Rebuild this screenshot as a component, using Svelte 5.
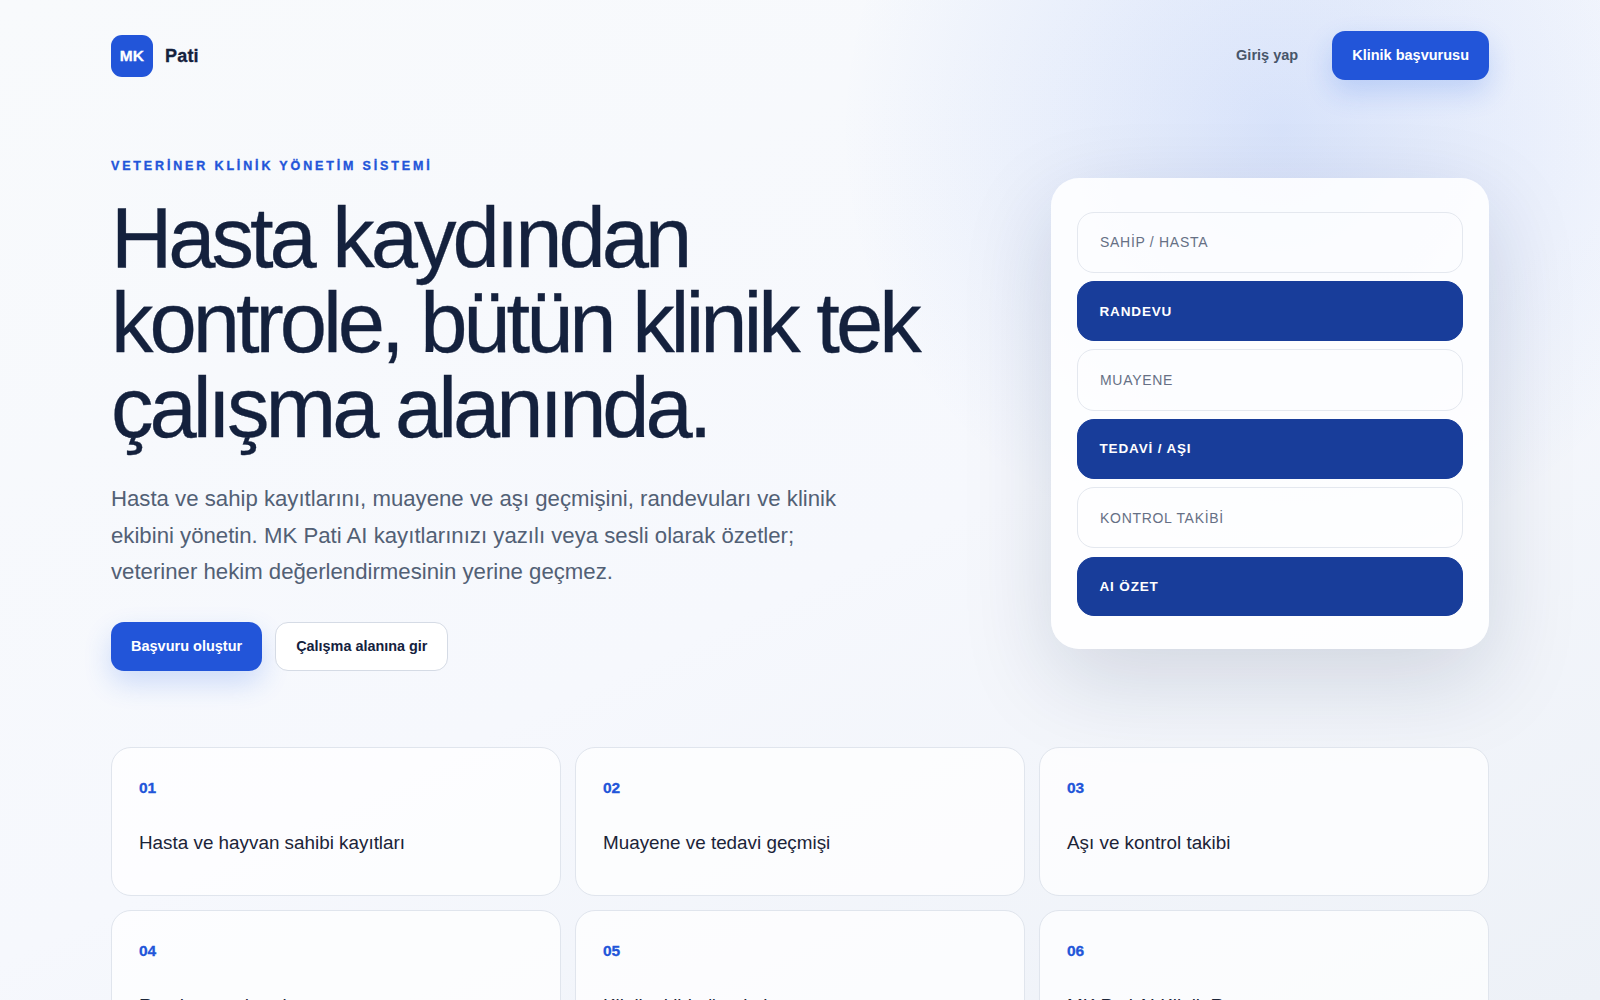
<script>
  const rows = [
    { label: 'SAHİP / HASTA', on: false },
    { label: 'RANDEVU', on: true },
    { label: 'MUAYENE', on: false },
    { label: 'TEDAVİ / AŞI', on: true },
    { label: 'KONTROL TAKİBİ', on: false },
    { label: 'AI ÖZET', on: true }
  ];
  const features = [
    ['01', 'Hasta ve hayvan sahibi kayıtları'],
    ['02', 'Muayene ve tedavi geçmişi'],
    ['03', 'Aşı ve kontrol takibi'],
    ['04', 'Randevu ve hatırlatma'],
    ['05', 'Klinik ekibi yönetimi'],
    ['06', 'MK Pati AI Klinik Raporu']
  ];
</script>

<div class="page">
  <header class="top">
    <a class="brand" href="#top"><span class="mark">MK</span><span class="name">Pati</span></a>
    <nav class="nav">
      <a class="login" href="#login">Giriş yap</a>
      <a class="btn primary" href="#apply">Klinik başvurusu</a>
    </nav>
  </header>

  <main>
    <section class="hero">
      <div class="copy">
        <p class="eyebrow">VETERİNER KLİNİK YÖNETİM SİSTEMİ</p>
        <h1>Hasta kaydından kontrole, bütün klinik tek çalışma alanında.</h1>
        <p class="lead">Hasta ve sahip kayıtlarını, muayene ve aşı geçmişini, randevuları ve klinik ekibini yönetin. MK Pati AI kayıtlarınızı yazılı veya sesli olarak özetler; veteriner hekim değerlendirmesinin yerine geçmez.</p>
        <div class="actions">
          <a class="btn primary" href="#apply">Başvuru oluştur</a>
          <a class="btn ghost" href="#work">Çalışma alanına gir</a>
        </div>
      </div>
      <aside class="panel">
        {#each rows as r}
          <div class="row" class:on={r.on}>{r.label}</div>
        {/each}
      </aside>
    </section>

    <section class="grid">
      {#each features as f}
        <article class="card">
          <span class="num">{f[0]}</span>
          <p>{f[1]}</p>
        </article>
      {/each}
    </section>
  </main>
</div>

<style>
  :global(html), :global(body) { height: 1000px; overflow: hidden; }
  :global(body) {
    margin: 0;
    font-family: "Liberation Sans", Arial, sans-serif;
    color: #14213d;
    background:
      radial-gradient(circle 440px at 80% 13%, rgba(37, 99, 235, 0.15) 0, rgba(37, 99, 235, 0.07) 50%, rgba(37, 99, 235, 0) 100%),
      linear-gradient(155deg, #f8fafc 0%, #f6f8fd 55%, #edf1f7 100%);
  }
  a { text-decoration: none; }
  .page { box-sizing: border-box; width: 100%; padding: 0 111px; height: 1000px; }
  .top { display: flex; align-items: center; justify-content: space-between; padding: 31px 0 0; height: 49px; }
  .brand { display: flex; align-items: center; gap: 12px; }
  .mark {
    width: 42px; height: 42px; border-radius: 11px; background: #2255d9; color: #fff;
    display: grid; place-items: center; font-weight: 700; font-size: 15.5px; letter-spacing: 0.2px;
    -webkit-text-stroke: 0.3px #fff;
  }
  .name { font-weight: 700; font-size: 18px; letter-spacing: 0.2px; color: #14213d; -webkit-text-stroke: 0.3px #14213d; padding-top: 2px; }
  .nav { display: flex; align-items: center; gap: 34px; }
  .login { font-size: 14.5px; font-weight: 700; color: #475569; padding-bottom: 1px; }
  .btn {
    display: inline-flex; align-items: center; justify-content: center; height: 49px; box-sizing: border-box;
    border-radius: 13px; font-size: 14.5px; font-weight: 700; padding: 0 20px 1px;
  }
  .primary { background: #2255d9; color: #fff; box-shadow: 0 12px 28px rgba(37, 99, 235, 0.2); }
  .ghost { background: #fff; color: #14213d; border: 1px solid #d5dbe5; font-size: 14.4px; }
  .hero { display: flex; justify-content: space-between; align-items: flex-start; padding-top: 78px; }
  .copy { width: 860px; }
  .eyebrow { margin: 0; font-size: 12.5px; line-height: 16px; font-weight: 700; letter-spacing: 2.85px; color: #2255d9; -webkit-text-stroke: 0.35px #2255d9; }
  h1 {
    margin: 20.5px 0 0; font-size: 85px; line-height: 85px; font-weight: 400; letter-spacing: -4.05px; color: #14213d; width: 840px;
    -webkit-text-stroke: 0.3px #14213d;
  }
  .lead { margin: 31.5px 0 0; font-size: 22.2px; line-height: 36.7px; color: #526075; width: 770px; }
  .actions { display: flex; gap: 13px; margin-top: 31px; }
  .panel {
    box-sizing: border-box; width: 438px; margin-top: 19.5px; padding: 34px 26px 33px; border-radius: 28px;
    background: rgba(255, 255, 255, 0.85);
    box-shadow: 0 30px 90px rgba(15, 35, 75, 0.15);
    display: flex; flex-direction: column; gap: 8.2px;
  }
  .row {
    box-sizing: border-box; height: 61.6px; display: flex; align-items: center; padding: 0 22px; border-radius: 17px;
    border: 1px solid #e4e8ef; font-size: 14px; letter-spacing: 0.7px; color: #667085;
  }
  .row.on { height: 59.7px; padding: 0 21.5px; background: #183d9a; border-color: #183d9a; color: #fff; font-size: 13.5px; letter-spacing: 0.85px; font-weight: 700; }
  .grid { display: grid; grid-template-columns: repeat(3, 1fr); gap: 14px; margin-top: 76px; }
  .card {
    box-sizing: border-box; height: 149px; padding: 32px 27px; border-radius: 20px;
    background: rgba(255, 255, 255, 0.72); border: 1px solid #e0e5ed;
  }
  .num { display: block; font-size: 15.5px; line-height: 16px; font-weight: 700; color: #2255d9; -webkit-text-stroke: 0.3px #2255d9; }
  .card p { margin: 34.5px 0 0; font-size: 18.85px; line-height: 24px; color: #1b2438; }
</style>
